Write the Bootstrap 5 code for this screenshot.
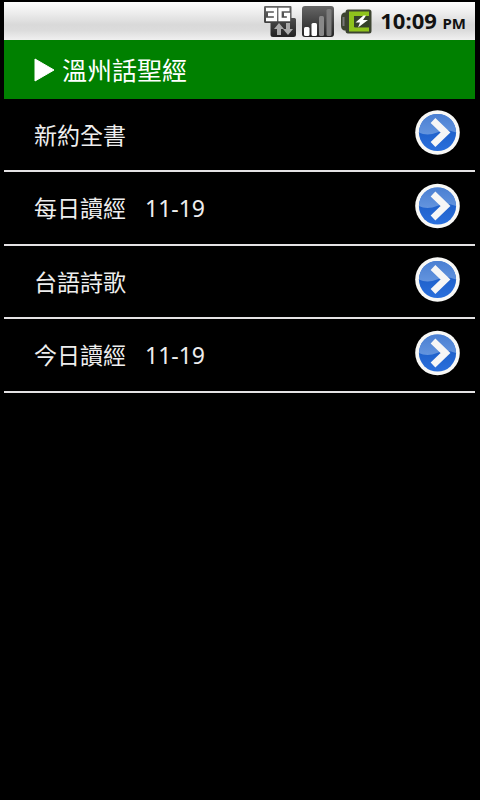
<!DOCTYPE html>
<html lang="zh-Hant">
<head>
<meta charset="utf-8">
<meta name="viewport" content="width=device-width, initial-scale=1">
<title>溫州話聖經</title>
<link href="https://cdn.jsdelivr.net/npm/bootstrap@5.3.0/dist/css/bootstrap.min.css" rel="stylesheet">
<style>
body { background: #000; color: #eee; font-family: "Noto Sans", "Noto Sans CJK TC", sans-serif; }
.screen { padding: 2px 5px 0 4px; }
.status-bar { height: 38px; padding-right: 9px; gap: 6px; color: #111; background: linear-gradient(#fdfdfd 0%, #ececec 30%, #d9d9d9 60%, #dcdcdc 75%, #f0f0f0 100%); }
.clock { font-size: 22px; line-height: 24px; margin-left: 2px; }
.clock small { font-size: 15px; }
.title-bar { height: 59px; padding-left: 30px; gap: 7px; background: #008000; }
.title-bar h1 { font-size: 25px; line-height: 32px; padding-top: 1px; color: #fff; }
.title-bar svg { margin-top: 1px; }
.menu-row { padding: 11px 15px 15px 30px; border-bottom: 2px solid #e4e2e4; color: #eee; font-size: 23px; line-height: 32px; }
.menu-row span { padding-top: 4px; }
.verse-date { margin-left: 19px; }
</style>
<script src="https://cdn.jsdelivr.net/npm/bootstrap@5.3.0/dist/js/bootstrap.bundle.min.js" defer></script>
</head>
<body>
<svg class="position-absolute" width="0" height="0" aria-hidden="true">
  <defs>
    <linearGradient id="blue" x1="0" y1="0" x2="0" y2="1"><stop offset="0" stop-color="#4a80d4"/><stop offset=".5" stop-color="#2062cc"/><stop offset="1" stop-color="#2a6fdc"/></linearGradient>
    <linearGradient id="gloss" x1="0" y1="0" x2="0" y2="1"><stop offset="0" stop-color="#4a7fd2"/><stop offset="1" stop-color="#6394de"/></linearGradient>
    <linearGradient id="dark" x1="0" y1="0" x2="0" y2="1"><stop offset="0" stop-color="#666"/><stop offset="1" stop-color="#222"/></linearGradient>
  </defs>
  <symbol id="go" viewBox="0 0 45 45">
    <circle cx="22.5" cy="22.5" r="22.3" fill="#f8f8f6"/>
    <circle cx="22.5" cy="22.5" r="18.6" fill="url(#blue)"/>
    <path d="M3.900 22.500a18.600 18.600 0 0 1 37.200 0C34 19.500 28 20 22 22.500C16 25 9 25 3.900 22.500z" fill="url(#gloss)"/>
    <path d="M18 10.500L30.500 22.500L18 34.500" fill="none" stroke="#f6f6f6" stroke-width="6.800"/>
  </symbol>
</svg>
<div class="screen">
  <div class="status-bar d-flex align-items-center justify-content-end">
    <svg width="32" height="34" viewBox="0 0 32 34" role="img" aria-label="3G">
      <path d="M1.500 2h25q1 0 1 1v11h3q1.500 0 1.500 1.500v15q0 2.500-2.500 2.500H9q-2.500 0-2.500-2.500V19H1.500q-1.500 0-1.500-1.500V3q0-1 1.500-1z" fill="url(#dark)"/>
      <path d="M2 5.500H11.500V15.500H2M4 10.500H12M25.500 5.500H16V15.500H24.500V10.500H20" fill="none" stroke="#fff" stroke-width="3.300"/>
      <path d="M15 19l5 6h-3v6h-4v-6h-3zM24 31l-5-6h3v-6h4v6h3z" fill="#aaa"/>
    </svg>
    <svg width="32" height="34" viewBox="0 0 32 34" role="img" aria-label="Signal">
      <rect x="0" y="2" width="32" height="31" rx="3" fill="url(#dark)"/>
      <rect x="2" y="23" width="5.500" height="9" rx="1.500" fill="#fff"/>
      <rect x="9.500" y="19" width="5.500" height="13" rx="1.500" fill="#fff"/>
      <rect x="17" y="12" width="5" height="20" rx="1.500" fill="#888"/>
      <rect x="24.500" y="5" width="5" height="27" rx="1.500" fill="#7c7c7c"/>
    </svg>
    <svg width="32" height="34" viewBox="0 0 32 34" role="img" aria-label="Charging">
      <path d="M8 5.500h21q2.500 0 2.500 2.500v19q0 2.500-2.500 2.500H8q-2.500 0-2.500-3H4q-3-1-3-5v-8q0-4 3-5h1.500q0-3 2.500-3z" fill="#3c4430"/>
      <path d="M3.500 13v9" stroke="#777" stroke-width="2"/>
      <path d="M9 7.500h20v5H14.500v11H29v4H9z" fill="#8fc31c"/>
      <path d="M14 12h15v11H14z" fill="#35412a"/>
      <path d="M23.500 11.500L15.500 18.500h4.500l-2 5 10-7.500h-5l3-4.500z" fill="#fff"/>
    </svg>
    <div class="clock fw-bold text-nowrap">10:09 <small class="fw-bold">PM</small></div>
  </div>
  <header class="title-bar d-flex align-items-center">
    <svg width="21" height="24" viewBox="0 0 21 24" aria-hidden="true"><path d="M1 1L20 12L1 23z" fill="#fff" stroke="#fff" stroke-linejoin="round"/></svg>
    <h1 class="m-0 fw-normal">溫州話聖經</h1>
  </header>
  <nav aria-label="溫州話聖經">
    <a class="menu-row d-flex align-items-center text-decoration-none" href="#new"><span>新約全書</span><svg class="ms-auto" width="45" height="45" aria-hidden="true"><use href="#go"/></svg></a>
    <a class="menu-row d-flex align-items-center text-decoration-none" href="#daily"><span>每日讀經</span><span class="verse-date">11-19</span><svg class="ms-auto" width="45" height="46" aria-hidden="true"><use href="#go"/></svg></a>
    <a class="menu-row d-flex align-items-center text-decoration-none" href="#hymns"><span>台語詩歌</span><svg class="ms-auto" width="45" height="45" aria-hidden="true"><use href="#go"/></svg></a>
    <a class="menu-row d-flex align-items-center text-decoration-none" href="#today"><span>今日讀經</span><span class="verse-date">11-19</span><svg class="ms-auto" width="45" height="46" aria-hidden="true"><use href="#go"/></svg></a>
  </nav>
</div>
</body>
</html>
